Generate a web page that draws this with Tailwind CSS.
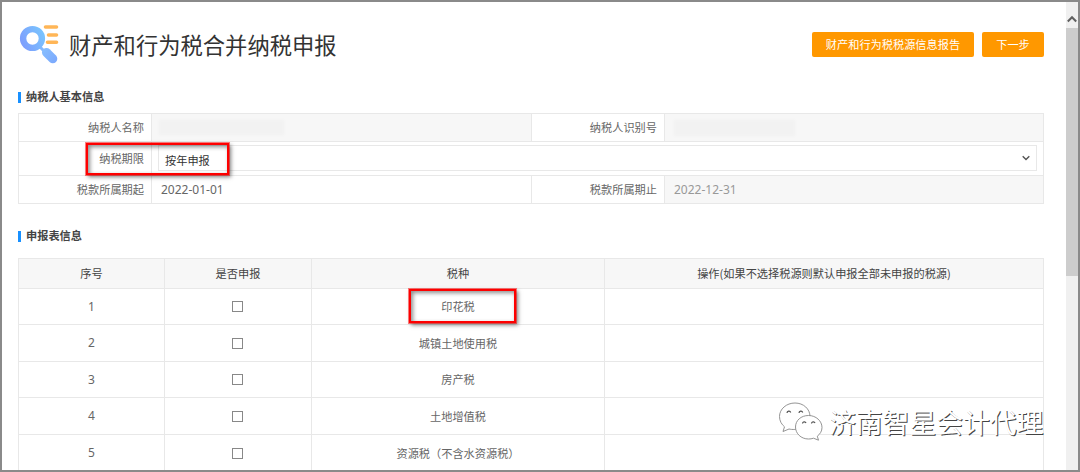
<!DOCTYPE html>
<html lang="zh-CN">

<head>
  <meta charset="UTF-8" />
  <meta name="viewport" content="width=device-width, initial-scale=1" />
  <title>财产和行为税合并纳税申报</title>
  <script src="https://cdn.jsdelivr.net/npm/@tailwindcss/browser@4"></script>
</head>

<body class="bg-white">

  <div
    class="relative flex w-[1080px] h-[472px] overflow-hidden border-2 border-[#8a8a8a] bg-white font-['Noto_Sans_CJK_SC',sans-serif] text-[11.2px] leading-[16px] text-[#666]">

    <main class="flex-1 pl-4">
      <!-- header -->
      <header class="flex h-[87px] w-[1026px] items-start">
        <svg class="mt-[22px] ml-[1px] h-[41px] w-[41px] shrink-0" viewBox="0 0 41 41" fill="none">
          <defs>
            <linearGradient id="lens" x1="1" y1="20" x2="27" y2="8" gradientUnits="userSpaceOnUse">
              <stop stop-color="#7e9cfd" />
              <stop offset="1" stop-color="#79c8fe" />
            </linearGradient>
            <linearGradient id="grip" x1="24" y1="26" x2="38" y2="38" gradientUnits="userSpaceOnUse">
              <stop stop-color="#86bdfe" />
              <stop offset="1" stop-color="#7ba8fd" />
            </linearGradient>
          </defs>
          <path d="M21 23l5 5" stroke="#84b8fe" stroke-width="3" />
          <circle cx="13.5" cy="14.5" r="9.4" stroke="url(#lens)" stroke-width="6.4" />
          <path d="M27.500 28.500l6.300 6.300" stroke="url(#grip)" stroke-width="9" stroke-linecap="round" />
          <path d="M26.500 3h11M29.500 11h8M28.500 18.200h9" stroke="#ffb657" stroke-width="3.6" stroke-linecap="round" />
        </svg>
        <h1 class="mt-[26px] ml-[9px] text-[22.3px] leading-[32px] text-[#333]">财产和行为税合并纳税申报</h1>
        <div class="mt-[30px] ml-auto flex gap-2 text-white">
          <button class="h-[25px] w-[162px] rounded-xs bg-[#ff9800] pb-px">财产和行为税税源信息报告</button>
          <button class="h-[25px] w-[62px] rounded-xs bg-[#ff9800] pb-px">下一步</button>
        </div>
      </header>

      <!-- taxpayer -->
      <h2 class="flex h-[24px] items-start font-bold text-[#444]">
        <span class="mt-[3px] mr-[5px] h-[11px] w-[3px] bg-[#1890ff]"></span>
        <span class="-mt-px">纳税人基本信息</span>
      </h2>
      <div
        class="grid w-[1026px] grid-cols-[133px_380px_133px_379px] grid-rows-[28px_34px_28px] border-t border-l border-[#e8e8e8] *:border-r *:border-b *:border-[#e8e8e8]">
        <div class="flex items-center justify-end pr-[7px] pb-px">纳税人名称</div>
        <div class="flex items-center bg-[#f7f7f7] pl-[7px]">
          <span class="h-[15px] w-[125px] bg-[#f2f2f2] blur-[1px]"></span>
        </div>
        <div class="flex items-center justify-end pr-[7px] pb-px">纳税人识别号</div>
        <div class="flex items-center bg-[#f7f7f7] pl-[9px]">
          <span class="h-[16px] w-[121px] bg-[#f2f2f2] blur-[1px]"></span>
        </div>

        <div class="flex items-center justify-end pr-[7px] pb-px">纳税期限</div>
        <div class="col-span-3 flex items-center pr-1.5 pb-px pl-1.5">
          <div class="flex h-[26px] w-full items-center justify-between border border-[#e8e8e8] pr-1.5 pl-1.5 text-[#333]">
            <span class="pt-[3px]">按年申报</span>
            <svg class="h-[8px] w-[8px]" viewBox="0 0 8 8" fill="none" stroke="#555" stroke-width="1.4">
              <path d="M.7 2.300L4 5.600l3.300-3.300" />
            </svg>
          </div>
        </div>

        <div class="flex items-center justify-end pr-[7px] pb-px">税款所属期起</div>
        <div class="flex items-center pl-[9px] font-['Noto_Sans',sans-serif] text-[12px]">2022-01-01</div>
        <div class="flex items-center justify-end pr-[7px] pb-px">税款所属期止</div>
        <div class="flex items-center bg-[#f7f7f7] pl-[9px] font-['Noto_Sans',sans-serif] text-[12px] text-[#999]">2022-12-31</div>
      </div>

      <!-- declarations -->
      <h2 class="mt-[24px] flex h-[30px] items-start font-bold text-[#444]">
        <span class="mt-[3px] mr-[5px] h-[11px] w-[3px] bg-[#1890ff]"></span>
        <span class="-mt-px">申报表信息</span>
      </h2>
      <div
        class="grid w-[1026px] grid-cols-[146px_147px_293px_439px] grid-rows-[30px_36px_37px_36px_37px_37px] border-t border-l border-[#e8e8e8] *:flex *:items-center *:justify-center *:border-r *:border-b *:border-[#e8e8e8]">
        <div class="bg-[#f7f7f7] pb-px text-[#444]">序号</div>
        <div class="bg-[#f7f7f7] pb-px text-[#444]">是否申报</div>
        <div class="bg-[#f7f7f7] pb-px text-[#444]">税种</div>
        <div class="bg-[#f7f7f7] pb-px text-[#444]">操作(如果不选择税源则默认申报全部未申报的税源)</div>

        <div class="font-['Noto_Sans',sans-serif] text-[12px]">1</div>
        <div class="pr-px"><span class="h-[11px] w-[11px] border border-[#888]"></span></div>
        <div class="pb-px">印花税</div>
        <div></div>

        <div class="font-['Noto_Sans',sans-serif] text-[12px]">2</div>
        <div class="pr-px"><span class="h-[11px] w-[11px] border border-[#888]"></span></div>
        <div class="pb-px">城镇土地使用税</div>
        <div></div>

        <div class="font-['Noto_Sans',sans-serif] text-[12px]">3</div>
        <div class="pr-px"><span class="h-[11px] w-[11px] border border-[#888]"></span></div>
        <div class="pb-px">房产税</div>
        <div></div>

        <div class="font-['Noto_Sans',sans-serif] text-[12px]">4</div>
        <div class="pr-px"><span class="h-[11px] w-[11px] border border-[#888]"></span></div>
        <div class="pb-px">土地增值税</div>
        <div></div>

        <div class="font-['Noto_Sans',sans-serif] text-[12px]">5</div>
        <div class="pr-px"><span class="h-[11px] w-[11px] border border-[#888]"></span></div>
        <div class="pb-px">资源税（不含水资源税）</div>
        <div></div>
      </div>
    </main>

    <!-- scrollbar -->
    <aside class="flex w-[12px] flex-col bg-[#f0f0f0]">
      <div class="flex h-[26px] items-center justify-center pt-[7px]">
        <svg class="h-[8px] w-[10px]" viewBox="0 0 10 8" fill="none" stroke="#606060" stroke-width="2">
          <path d="M.8 6.500L5 2.200l4.200 4.300" />
        </svg>
      </div>
      <div class="h-[248px] bg-[#cdcdcd]"></div>
    </aside>

    <!-- highlights -->
    <div class="absolute top-[141px] left-[84px] h-[32px] w-[143px] border-[2.5px] border-[#fe0000] shadow-[2px_2px_4px_rgba(0,0,0,.5),inset_2px_2px_4px_rgba(0,0,0,.45)] outline-[0.5px] outline-[#fe0000]/50"></div>
    <div class="absolute top-[287px] left-[407px] h-[34px] w-[107px] border-[2.5px] border-[#fe0000] shadow-[2px_2px_4px_rgba(0,0,0,.5),inset_2px_2px_4px_rgba(0,0,0,.45)] outline-[0.5px] outline-[#fe0000]/50"></div>

    <!-- watermark -->
    <div class="absolute top-[400px] left-[776px] flex items-center">
      <svg class="h-[40px] w-[46px]" viewBox="0 0 46 40" fill="#fff" stroke="#888" stroke-width=".9">
        <path d="M17 1C8.500 1 1.500 7 1.500 14.500c0 4.500 2.200 8 5 10.300L5 29.500l6-2.500c6 1.500 21 0 21-12.500C32 7 25.500 1 17 1z" />
        <path d="M30.500 13.500c-7.500 0-13 5-13 11.500s5.500 12 13 12c1.800 0 3.400-.2 5-.8l5 2-1.200-4c2.800-2.100 4.700-5.100 4.700-8.700 0-6.500-6-12-13.500-12z" />
        <g fill="none" stroke="#555" stroke-width="1.200">
          <path d="M9 11a1.900 1.900 0 0 1 3.700-.5M21 11a1.900 1.900 0 0 1 3.700-.5M24.500 21.500a1.800 1.800 0 0 1 3.500-.5M33.500 21.500a1.800 1.800 0 0 1 3.500-.5" />
        </g>
      </svg>
      <span class="ml-[5px] text-[26.8px] leading-[40px] whitespace-nowrap text-white [text-shadow:1px_1px_0_#444]">济南智星会计代理</span>
    </div>
  </div>

</body>

</html>
